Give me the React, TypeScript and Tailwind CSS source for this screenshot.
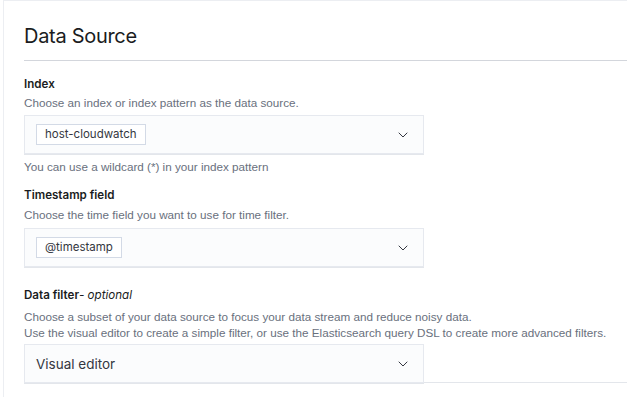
import { ChevronDown } from "lucide-react";

const help = "font-['Liberation_Sans',Arial,sans-serif] text-[11.7px] leading-[16px] text-[#69707d]";
const label = "text-[11.6px] leading-[16px] text-[#1a1c21]";

function SelectBox({ children }: { children: React.ReactNode }) {
  return (
    <div className="flex h-[39px] w-[400px] shrink-0 items-center justify-between border border-[#e6e9ef] bg-[#fbfcfd] pl-[11px] pr-[12px] shadow-[0_1px_0_#e3e6eb]">
      {children}
      <ChevronDown className="h-[16px] w-[16px] text-[#343741]" strokeWidth={1.5} />
    </div>
  );
}

function Chip({ label }: { label: string }) {
  return (
    <span className="border border-[#d3dae6] bg-white px-[8px] py-[2px] text-[11.5px] leading-[15px] text-[#343741]">
      {label}
    </span>
  );
}

export default function App() {
  return (
    <div
      className="h-[397px] w-[627px] overflow-hidden bg-white"
      style={{ fontFamily: "Inter, 'Liberation Sans', sans-serif" }}
    >
      <div className="ml-[3px] h-full border-l border-t border-[#eceef2] pl-[20px]">
        {/* Title */}
        <h2 className="pt-[22px] text-[20px] leading-[26px] font-normal tracking-[-0.3px] text-[#1a1c21]">
          Data Source
        </h2>

        <div className="mt-[11px] border-b border-[#d3d6dc]" />

        {/* Index */}
        <div className="mt-[15px]">
          <p className={`${label} font-semibold`}>Index</p>
          <p className={`mt-[3px] ${help}`}>Choose an index or index pattern as the data source.</p>
          <div className="mt-[4px]">
            <SelectBox>
              <Chip label="host-cloudwatch" />
            </SelectBox>
          </div>
          <p className={`mt-[5px] ${help}`}>You can use a wildcard (*) in your index pattern</p>
        </div>

        {/* Timestamp */}
        <div className="mt-[12px]">
          <p className={`${label} font-semibold`}>Timestamp field</p>
          <p className={`mt-[4px] ${help}`}>Choose the time field you want to use for time filter.</p>
          <div className="mt-[5px]">
            <SelectBox>
              <Chip label="@timestamp" />
            </SelectBox>
          </div>
        </div>

        {/* Data filter */}
        <div className="mt-[20px]">
          <p className={label}>
            <span className="font-semibold">Data filter</span>
            <span className="italic">- optional</span>
          </p>
          <p className={`mt-[6px] whitespace-nowrap ${help}`}>
            Choose a subset of your data source to focus your data stream and reduce noisy data.
          </p>
          <p className={`whitespace-nowrap ${help}`}>
            Use the visual editor to create a simple filter, or use the Elasticsearch query DSL to create more advanced filters.
          </p>
          <div className="mt-[3px] flex items-end">
            <SelectBox>
              <span className="text-[13.5px] leading-[20px] text-[#343741]">Visual editor</span>
            </SelectBox>
            <div className="flex-1 border-b border-[#e3e6eb]" />
          </div>
        </div>
      </div>
    </div>
  );
}
